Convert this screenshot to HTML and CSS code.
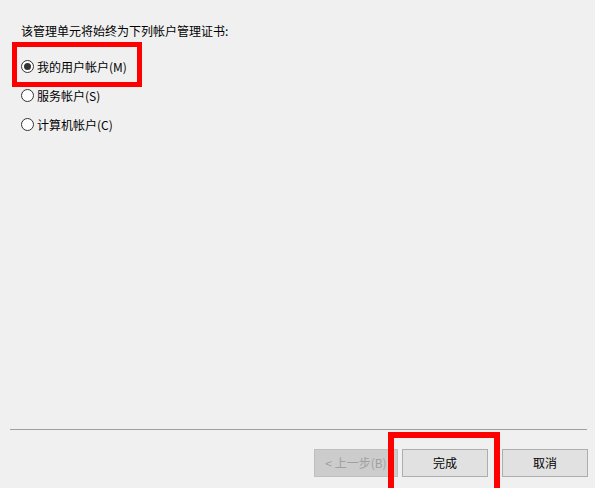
FILE: index.html
```html
<!DOCTYPE html>
<html lang="zh-CN">
<head>
<meta charset="utf-8">
<title>证书管理单元</title>
<link rel="stylesheet" href="styles.css">
</head>
<body>
<div class="dialog">
  <div class="content">
    <p class="prompt">该管理单元将始终为下列帐户管理证书:</p>
    <div class="options">
      <label class="option"><span class="radio checked"></span><span>我的用户帐户(M)</span></label>
      <label class="option"><span class="radio"></span><span>服务帐户(S)</span></label>
      <label class="option"><span class="radio"></span><span>计算机帐户(C)</span></label>
    </div>
  </div>
  <div class="footer">
    <div class="separator"></div>
    <div class="buttons">
      <button class="btn btn-back" disabled>&lt; 上一步(B)</button>
      <button class="btn btn-finish">完成</button>
      <button class="btn btn-cancel">取消</button>
    </div>
  </div>
  <div class="mark mark-radio"></div>
  <div class="mark mark-finish"></div>
</div>
</body>
</html>
```

FILE: styles.css
```css
html, body {
  margin: 0;
  padding: 0;
  width: 595px;
  height: 488px;
  overflow: hidden;
  background: #f0f0f0;
  font-family: "Noto Sans CJK SC", "Noto Sans", sans-serif;
  font-size: 12px;
  color: #000;
}

.dialog {
  position: relative;
  width: 595px;
  height: 488px;
  display: flex;
  flex-direction: column;
}

.content {
  flex: 1;
  padding: 23px 0 0 21px;
}

.prompt {
  margin: 0;
  line-height: 16px;
}

.options {
  display: flex;
  flex-direction: column;
  padding-top: 13px;
}

.option {
  display: flex;
  align-items: center;
  height: 29px;
  line-height: 16px;
}

.radio {
  box-sizing: border-box;
  width: 13px;
  height: 13px;
  border: 1px solid #333;
  border-radius: 50%;
  background: #fff;
  margin-right: 3px;
  display: flex;
  align-items: center;
  justify-content: center;
  flex-shrink: 0;
}

.radio.checked::after {
  content: "";
  width: 7px;
  height: 7px;
  border-radius: 50%;
  background: #333;
}

.footer {
  display: flex;
  flex-direction: column;
  padding-bottom: 11px;
}

.separator {
  height: 1px;
  background: #a0a0a0;
  margin: 0 8px 0 10px;
}

.buttons {
  display: flex;
  justify-content: flex-end;
  margin-top: 19px;
  padding-right: 7px;
}

.btn {
  box-sizing: border-box;
  height: 28px;
  width: 86px;
  border: 1px solid #adadad;
  background: #e1e1e1;
  font-family: "Noto Sans CJK SC", "Noto Sans", sans-serif;
  font-size: 12px;
  color: #000;
  padding: 0;
  line-height: 16px;
}

.btn-back {
  width: 84px;
  background: #cccccc;
  border-color: #bfbfbf;
  color: #a0a0a0;
  margin-right: 4px;
}

.btn-finish {
  margin-right: 14px;
}

.mark {
  position: absolute;
  box-sizing: border-box;
  border-style: solid;
  border-color: #f00;
  pointer-events: none;
}

.mark-radio {
  left: 12px;
  top: 42px;
  width: 130px;
  height: 45px;
  border-width: 5px;
}

.mark-finish {
  left: 388px;
  top: 432px;
  width: 112px;
  height: 64px;
  border-width: 6px;
}
```
